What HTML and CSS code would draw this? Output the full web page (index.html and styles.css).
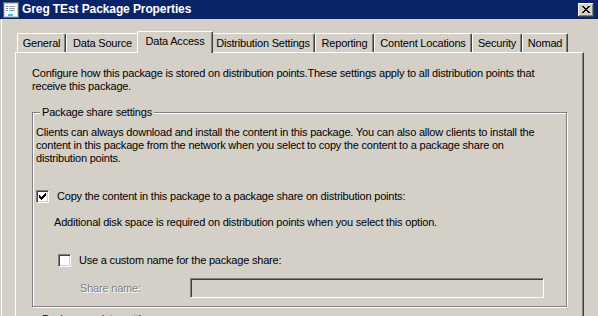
FILE: index.html
```html
<!DOCTYPE html>
<html>
<head>
<link rel="stylesheet" href="styles.css">
</head>
<body>
<div class="window">
  <div class="titlebar">
    <svg class="app-icon" width="16" height="16" viewBox="0 0 16 16">
      <rect x="0.5" y="0.5" width="15" height="15" fill="#c8ccd4" stroke="#5c6474"/>
      <rect x="2" y="2" width="12" height="12" fill="#fff"/>
      <rect x="3" y="4" width="2" height="1" fill="#7a8496"/>
      <rect x="6" y="4" width="6" height="1" fill="#9aa4b4"/>
      <rect x="3" y="6" width="2" height="1" fill="#7a8496"/>
      <rect x="6" y="6" width="6" height="1" fill="#9aa4b4"/>
      <rect x="3" y="8" width="2" height="1" fill="#7a8496"/>
      <rect x="6" y="8" width="6" height="1" fill="#9aa4b4"/>
      <rect x="5" y="12" width="5" height="2" fill="#2cc4f0"/>
    </svg>
    <span class="title">Greg TEst Package Properties</span>
    <span class="close">
      <svg width="8" height="7" viewBox="0 0 8 7" shape-rendering="crispEdges">
        <path d="M0 0h2v1H0zM6 0h2v1H6zM1 1h2v1H1zM5 1h2v1H5zM2 2h4v1H2zM3 3h2v1H3zM2 4h4v1H2zM1 5h2v1H1zM5 5h2v1H5zM0 6h2v1H0zM6 6h2v1H6z" fill="#000"/>
      </svg>
    </span>
  </div>

  <div class="tabs">
    <div class="tab">General</div>
    <div class="tab">Data Source</div>
    <div class="tab active">Data Access</div>
    <div class="tab">Distribution Settings</div>
    <div class="tab">Reporting</div>
    <div class="tab">Content Locations</div>
    <div class="tab">Security</div>
    <div class="tab">Nomad</div>
  </div>

  <div class="panel">
    <p class="intro">Configure how this package is stored on distribution points.These settings apply to all distribution points that<br>receive this package.</p>

    <fieldset class="group">
      <legend>Package share settings</legend>
      <p class="note">Clients can always download and install the content in this package. You can also allow clients to install the<br>content in this package from the network when you select to copy the content to a package share on<br>distribution points.</p>

      <div class="option">
        <span class="check">
          <svg width="9" height="9" viewBox="0 0 9 9" shape-rendering="crispEdges">
            <path d="M1 3h1v3H1zM2 4h1v3H2zM3 5h1v3H3zM4 4h1v3H4zM5 3h1v3H5zM6 2h1v3H6zM7 1h1v3H7z" fill="#000"/>
          </svg>
        </span>
        <span>Copy the content in this package to a package share on distribution points:</span>
      </div>
      <p class="hint">Additional disk space is required on distribution points when you select this option.</p>

      <div class="option sub">
        <span class="check"></span>
        <span>Use a custom name for the package share:</span>
      </div>
      <div class="field">
        <span class="field-label">Share name:</span>
        <span class="textbox"></span>
      </div>
    </fieldset>

    <fieldset class="group next">
      <legend>Package update settings</legend>
    </fieldset>
  </div>
</div>
</body>
</html>
```

FILE: styles.css
```css
* { box-sizing: border-box; }

body {
	margin: 0;
	width: 598px;
	height: 316px;
	overflow: hidden;
	background: #d4d0c8;
	color: #000;
	font-family: "Liberation Sans", Arial, sans-serif;
	font-size: 11px;
	line-height: 13px;
	letter-spacing: -0.2px;
}

.window {
	height: 316px;
	box-shadow: inset 1px 0 0 #d4d0c8, inset 2px 0 0 #fff;
}

/* title bar */
.titlebar {
	display: flex;
	align-items: center;
	height: 19px;
	padding-left: 3px;
	background: #0a246a;
}
.app-icon { flex: none; }
.title {
	margin-left: 3px;
	color: #fff;
	font-weight: bold;
	font-size: 12px;
	letter-spacing: -0.1px;
	white-space: nowrap;
}
.close {
	display: flex;
	align-items: center;
	justify-content: center;
	width: 16px;
	height: 14px;
	margin-left: auto;
	margin-right: 4px;
	background: #d4d0c8;
	box-shadow: inset -1px -1px 0 #404040, inset 1px 1px 0 #fff, inset -2px -2px 0 #808080;
}

/* tab strip */
.tabs {
	display: flex;
	align-items: flex-end;
	height: 21px;
	margin-top: 12px;
	padding-left: 17px;
}
.tab {
	height: 19px;
	padding-top: 3px;
	text-align: center;
	white-space: nowrap;
	border-top: 1px solid #fff;
	border-left: 1px solid #fff;
	border-right: 1px solid #404040;
	border-radius: 2px 2px 0 0;
	box-shadow: inset -1px 0 0 #808080;
	background: #d4d0c8;
}
.tab:nth-child(1) { width: 49px; }
.tab:nth-child(2) { width: 73px; }
.tab:nth-child(3) { width: 72px; }
.tab:nth-child(4) { width: 104px; }
.tab:nth-child(5) { width: 59px; }
.tab:nth-child(6) { width: 98px; }
.tab:nth-child(7) { width: 50px; }
.tab:nth-child(8) { width: 46px; }

.tab.active {
	position: relative;
	z-index: 1;
	width: 76px;
	height: 22px;
	margin: 0 -2px -1px;
	padding-top: 3px;
}

/* tab page */
.panel {
	width: 569px;
	height: 300px;
	margin-left: 15px;
	padding: 14px 0 0 16px;
	border-top: 1px solid #fff;
	border-left: 1px solid #fff;
	border-right: 1px solid #404040;
	box-shadow: inset -1px 0 0 #808080;
}
.intro {
	margin: 0;
	white-space: nowrap;
}

.group {
	width: 535px;
	margin: 13px 0 0;
	padding: 0 3px 8px;
	border: 1px solid #808080;
	box-shadow: inset 1px 1px 0 #fff, 1px 1px 0 #fff;
	min-width: 0;
}
.group legend {
	margin-left: 4px;
	padding: 0 2px;
	line-height: 13px;
	background: #d4d0c8;
}
.group.next {
	margin-top: 6px;
	height: 40px;
}

.note {
	margin: 7px 0 0;
	white-space: nowrap;
}

.option {
	display: flex;
	align-items: center;
	gap: 8px;
	margin-top: 25px;
	white-space: nowrap;
}
.option.sub {
	margin-left: 22px;
}
.check {
	display: flex;
	align-items: center;
	justify-content: center;
	width: 13px;
	height: 13px;
	background: #fff;
	border-top: 1px solid #808080;
	border-left: 1px solid #808080;
	border-right: 1px solid #fff;
	border-bottom: 1px solid #fff;
	box-shadow: inset 1px 1px 0 #404040, inset -1px -1px 0 #d4d0c8;
}

.hint {
	margin: 13px 0 0 18px;
	white-space: nowrap;
}

.field {
	display: flex;
	align-items: center;
	margin: 11px 0 0 44px;
}
.field-label {
	width: 110px;
	color: #808080;
	text-shadow: 1px 1px 0 #fff;
}
.textbox {
	width: 354px;
	height: 20px;
	border-top: 1px solid #808080;
	border-left: 1px solid #808080;
	border-right: 1px solid #fff;
	border-bottom: 1px solid #fff;
	box-shadow: inset 1px 1px 0 #404040, inset -1px -1px 0 #d4d0c8;
}
```
